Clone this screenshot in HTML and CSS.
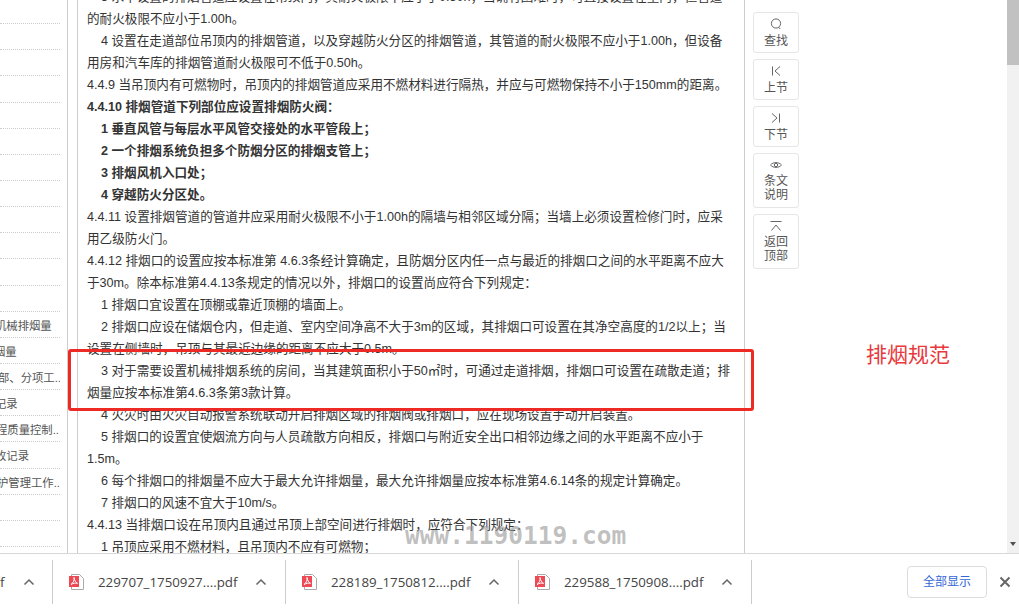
FILE: index.html
```html
<!DOCTYPE html>
<html lang="zh-CN">
  <head>
    <meta charset="UTF-8" />
    <title>排烟规范</title>
    <link rel="stylesheet" href="styles.css">
  </head>
  <body>
    <div class="main">
      <ul class="side">
        <li></li><li></li><li></li><li></li><li></li><li></li><li></li><li></li><li></li><li></li><li></li><li></li>
        <li class="cut5">机械排烟量</li>
        <li class="cut6">烟量</li>
        <li class="cut2">部、分项工..</li>
        <li class="cut5">记录</li>
        <li class="cut4">程质量控制..</li>
        <li class="cut5">收记录</li>
        <li class="cut3">护管理工作..</li>
        <li></li><li></li><li></li>
      </ul>
      <div class="article">
        <p class="in">3 水平设置的排烟管道应设置在吊顶内，其耐火极限不应小于0.50h；当确有困难时，可直接设置在室内，但管道<br>的耐火极限不应小于1.00h。</p>
        <p class="in">4 设置在走道部位吊顶内的排烟管道，以及穿越防火分区的排烟管道，其管道的耐火极限不应小于1.00h，但设备<br>用房和汽车库的排烟管道耐火极限可不低于0.50h。</p>
        <p>4.4.9 当吊顶内有可燃物时，吊顶内的排烟管道应采用不燃材料进行隔热，并应与可燃物保持不小于150mm的距离。</p>
        <p class="bold">4.4.10 排烟管道下列部位应设置排烟防火阀：</p>
        <p class="in bold">1 垂直风管与每层水平风管交接处的水平管段上；</p>
        <p class="in bold">2 一个排烟系统负担多个防烟分区的排烟支管上；</p>
        <p class="in bold">3 排烟风机入口处；</p>
        <p class="in bold">4 穿越防火分区处。</p>
        <p>4.4.11 设置排烟管道的管道井应采用耐火极限不小于1.00h的隔墙与相邻区域分隔；当墙上必须设置检修门时，应采<br>用乙级防火门。</p>
        <p>4.4.12 排烟口的设置应按本标准第 4.6.3条经计算确定，且防烟分区内任一点与最近的排烟口之间的水平距离不应大<br>于30m。除本标准第4.4.13条规定的情况以外，排烟口的设置尚应符合下列规定：</p>
        <p class="in">1 排烟口宜设置在顶棚或靠近顶棚的墙面上。</p>
        <p class="in">2 排烟口应设在储烟仓内，但走道、室内空间净高不大于3m的区域，其排烟口可设置在其净空高度的1/2以上；当<br>设置在侧墙时，吊顶与其最近边缘的距离不应大于0.5m。</p>
        <p class="in">3 对于需要设置机械排烟系统的房间，当其建筑面积小于50㎡时，可通过走道排烟，排烟口可设置在疏散走道；排<br>烟量应按本标准第4.6.3条第3款计算。</p>
        <p class="in">4 火灾时由火灾自动报警系统联动开启排烟区域的排烟阀或排烟口，应在现场设置手动开启装置。</p>
        <p class="in">5 排烟口的设置宜使烟流方向与人员疏散方向相反，排烟口与附近安全出口相邻边缘之间的水平距离不应小于<br>1.5m。</p>
        <p class="in">6 每个排烟口的排烟量不应大于最大允许排烟量，最大允许排烟量应按本标准第4.6.14条的规定计算确定。</p>
        <p class="in">7 排烟口的风速不宜大于10m/s。</p>
        <p>4.4.13 当排烟口设在吊顶内且通过吊顶上部空间进行排烟时，应符合下列规定：</p>
        <p class="in">1 吊顶应采用不燃材料，且吊顶内不应有可燃物；</p>
      </div>
      <div class="tools">
        <div class="tool">
          <svg width="12" height="12" viewBox="0 0 12 12"><circle cx="6" cy="5.500" r="4.600"/><path d="M8.600 9.200l1.600 1.800"/></svg>
          <span>查找</span>
        </div>
        <div class="tool">
          <svg width="12" height="12" viewBox="0 0 12 12"><path d="M2.500 1.500v9M10 1.500L5 6l5 4.500"/></svg>
          <span>上节</span>
        </div>
        <div class="tool">
          <svg width="12" height="12" viewBox="0 0 12 12"><path d="M9.500 1.500v9M2 1.500L7 6l-5 4.500"/></svg>
          <span>下节</span>
        </div>
        <div class="tool two">
          <svg width="14" height="12" viewBox="0 0 14 12"><path d="M1.500 6C4 2.800 10 2.800 12.500 6C10 9.200 4 9.200 1.500 6z"/><circle cx="7" cy="6" r="1.700"/></svg>
          <span>条文<br>说明</span>
        </div>
        <div class="tool two">
          <svg width="14" height="12" viewBox="0 0 14 12"><path d="M1.500 1.500h11M2.500 10.500L7 5l4.500 5.500"/></svg>
          <span>返回<br>顶部</span>
        </div>
      </div>
      <div class="scrollbar">
        <div class="thumb"></div>
        <div class="arrow"></div>
      </div>
    </div>

    <div class="downloads">
      <div class="dl first">
        <span class="name">f</span>
        <svg class="chev" width="12" height="8" viewBox="0 0 12 8"><path d="M1.500 6.500L6 2l4.500 4.500"/></svg>
      </div>
      <div class="dl">
        <svg class="pdf" width="16" height="16" viewBox="0 0 16 16"><path class="sheet" d="M2.500 .5h8l4 4v11h-12z"/><rect class="red" x="0" y="2" width="10" height="11"/><path class="mark" d="M5 3.500c.6 3-1 5.500-3 7 2-1.200 4.500-1.800 6.500-1.200-2-.8-3-3-3.500-5.800z"/></svg>
        <span class="name">229707_1750927....pdf</span>
        <svg class="chev" width="12" height="8" viewBox="0 0 12 8"><path d="M1.500 6.500L6 2l4.500 4.500"/></svg>
      </div>
      <div class="dl">
        <svg class="pdf" width="16" height="16" viewBox="0 0 16 16"><path class="sheet" d="M2.500 .5h8l4 4v11h-12z"/><rect class="red" x="0" y="2" width="10" height="11"/><path class="mark" d="M5 3.500c.6 3-1 5.500-3 7 2-1.200 4.500-1.800 6.500-1.200-2-.8-3-3-3.500-5.800z"/></svg>
        <span class="name">228189_1750812....pdf</span>
        <svg class="chev" width="12" height="8" viewBox="0 0 12 8"><path d="M1.500 6.500L6 2l4.500 4.500"/></svg>
      </div>
      <div class="dl">
        <svg class="pdf" width="16" height="16" viewBox="0 0 16 16"><path class="sheet" d="M2.500 .5h8l4 4v11h-12z"/><rect class="red" x="0" y="2" width="10" height="11"/><path class="mark" d="M5 3.500c.6 3-1 5.500-3 7 2-1.200 4.500-1.800 6.500-1.200-2-.8-3-3-3.500-5.800z"/></svg>
        <span class="name">229588_1750908....pdf</span>
        <svg class="chev" width="12" height="8" viewBox="0 0 12 8"><path d="M1.500 6.500L6 2l4.500 4.500"/></svg>
      </div>
      <div class="show-all">全部显示</div>
      <svg class="close" width="12" height="12" viewBox="0 0 12 12"><path d="M1.500 1.500l9 9M10.500 1.500l-9 9"/></svg>
    </div>

    <!-- marks drawn over the screenshot -->
    <div class="red-box"></div>
    <div class="note">排烟规范</div>
    <div class="watermark">www.1190119.com</div>
  </body>
</html>
```

FILE: styles.css
```css
* {
  margin: 0;
  padding: 0;
  box-sizing: border-box;
}
html,
body {
  height: 100%;
  overflow: hidden;
}
body {
  position: relative;
  background: #fff;
  font-family: "Liberation Sans", "Noto Sans CJK SC", sans-serif;
  color: #333;
}
ul {
  list-style: none;
}
.main {
  display: flex;
  height: 553px;
  overflow: hidden;
}
.side {
  flex: none;
  width: 68px;
  height: 555px;
  padding-right: 7px;
  margin-top: -2px;
  border-right: 1px solid #ccc;
  font-size: 11.34px;
  color: #555;
  overflow: hidden;
}
.side li {
  height: 26.15px;
  line-height: 28px;
  white-space: nowrap;
  overflow: hidden;
  border-bottom: 1px dotted #ccc;
}
.cut2 { text-indent: -2px; }
.cut3 { text-indent: -3px; }
.cut4 { text-indent: -4px; }
.cut5 { text-indent: -5px; }
.cut6 { text-indent: -6px; }
.article {
  flex: none;
  width: 668px;
  height: 568px;
  margin-left: 9px;
  margin-top: -14px;
  padding-left: 9px;
  border-left: 1px solid #ccc;
  border-right: 1px solid #ccc;
  font-size: 12.6px;
  line-height: 22px;
  white-space: nowrap;
}
.article .in {
  text-indent: 14px;
}
.article .bold {
  font-weight: bold;
}
.tools {
  flex: none;
  width: 262px;
  padding: 12px 0 0 8px;
  display: flex;
  flex-direction: column;
  align-items: flex-start;
  gap: 6px;
}
.tool {
  width: 46px;
  padding: 5px 0 4px;
  border: 1px solid #e6e6e6;
  border-radius: 3px;
  display: flex;
  flex-direction: column;
  align-items: center;
  gap: 4px;
  font-size: 12px;
  line-height: 14px;
  text-align: center;
  color: #555;
}
.tool.two {
  padding-bottom: 5px;
  gap: 3px;
}
.tool svg {
  fill: none;
  stroke: #666;
  stroke-width: 1;
}
.scrollbar {
  flex: none;
  position: relative;
  width: 12px;
  background: #f1f1f1;
}
.thumb {
  height: 65px;
  background: #c1c1c1;
}
.arrow {
  position: absolute;
  left: 3px;
  bottom: 7px;
  border-top: 4px solid #505050;
  border-left: 3.500px solid transparent;
  border-right: 3.500px solid transparent;
}
.downloads {
  display: flex;
  align-items: center;
  height: 57px;
  border-top: 1px solid #d8d8d8;
  background: #fff;
}
.dl {
  flex: none;
  display: flex;
  align-items: center;
  width: 233px;
  height: 44px;
  padding-left: 16px;
  border-right: 1px solid #ccc;
}
.dl.first {
  width: 53px;
  padding-left: 0;
}
.dl.first .chev {
  margin-left: 19px;
}
.name {
  font-family: "Open Sans", sans-serif;
  font-size: 13.3px;
  color: #444;
}
.pdf {
  flex: none;
  margin-right: 13px;
}
.sheet {
  fill: #fff;
  stroke: #aaa;
}
.red {
  fill: #ee4a56;
}
.mark {
  fill: none;
  stroke: #fff;
}
.chev {
  flex: none;
  margin-left: 18px;
  fill: none;
  stroke: #666;
  stroke-width: 1.500;
}
.show-all {
  margin-left: 155px;
  width: 80px;
  height: 32px;
  line-height: 30px;
  border: 1px solid #dadce0;
  border-radius: 4px;
  font-size: 12px;
  text-align: center;
  color: #3367d6;
}
.close {
  margin-left: 12px;
  fill: none;
  stroke: #666;
  stroke-width: 2;
}
.red-box {
  position: absolute;
  left: 68px;
  top: 349px;
  width: 686px;
  height: 62px;
  border: 3px solid #ee2a24;
  border-radius: 3px;
}
.note {
  position: absolute;
  left: 866px;
  top: 340px;
  font-size: 21px;
  line-height: 30px;
  color: #e8393c;
}
.watermark {
  position: absolute;
  left: 405px;
  top: 522px;
  font-family: "DejaVu Sans Mono", monospace;
  font-size: 24.5px;
  font-weight: bold;
  line-height: 28px;
  white-space: pre;
  color: rgba(150, 150, 150, 0.6);
}
```
